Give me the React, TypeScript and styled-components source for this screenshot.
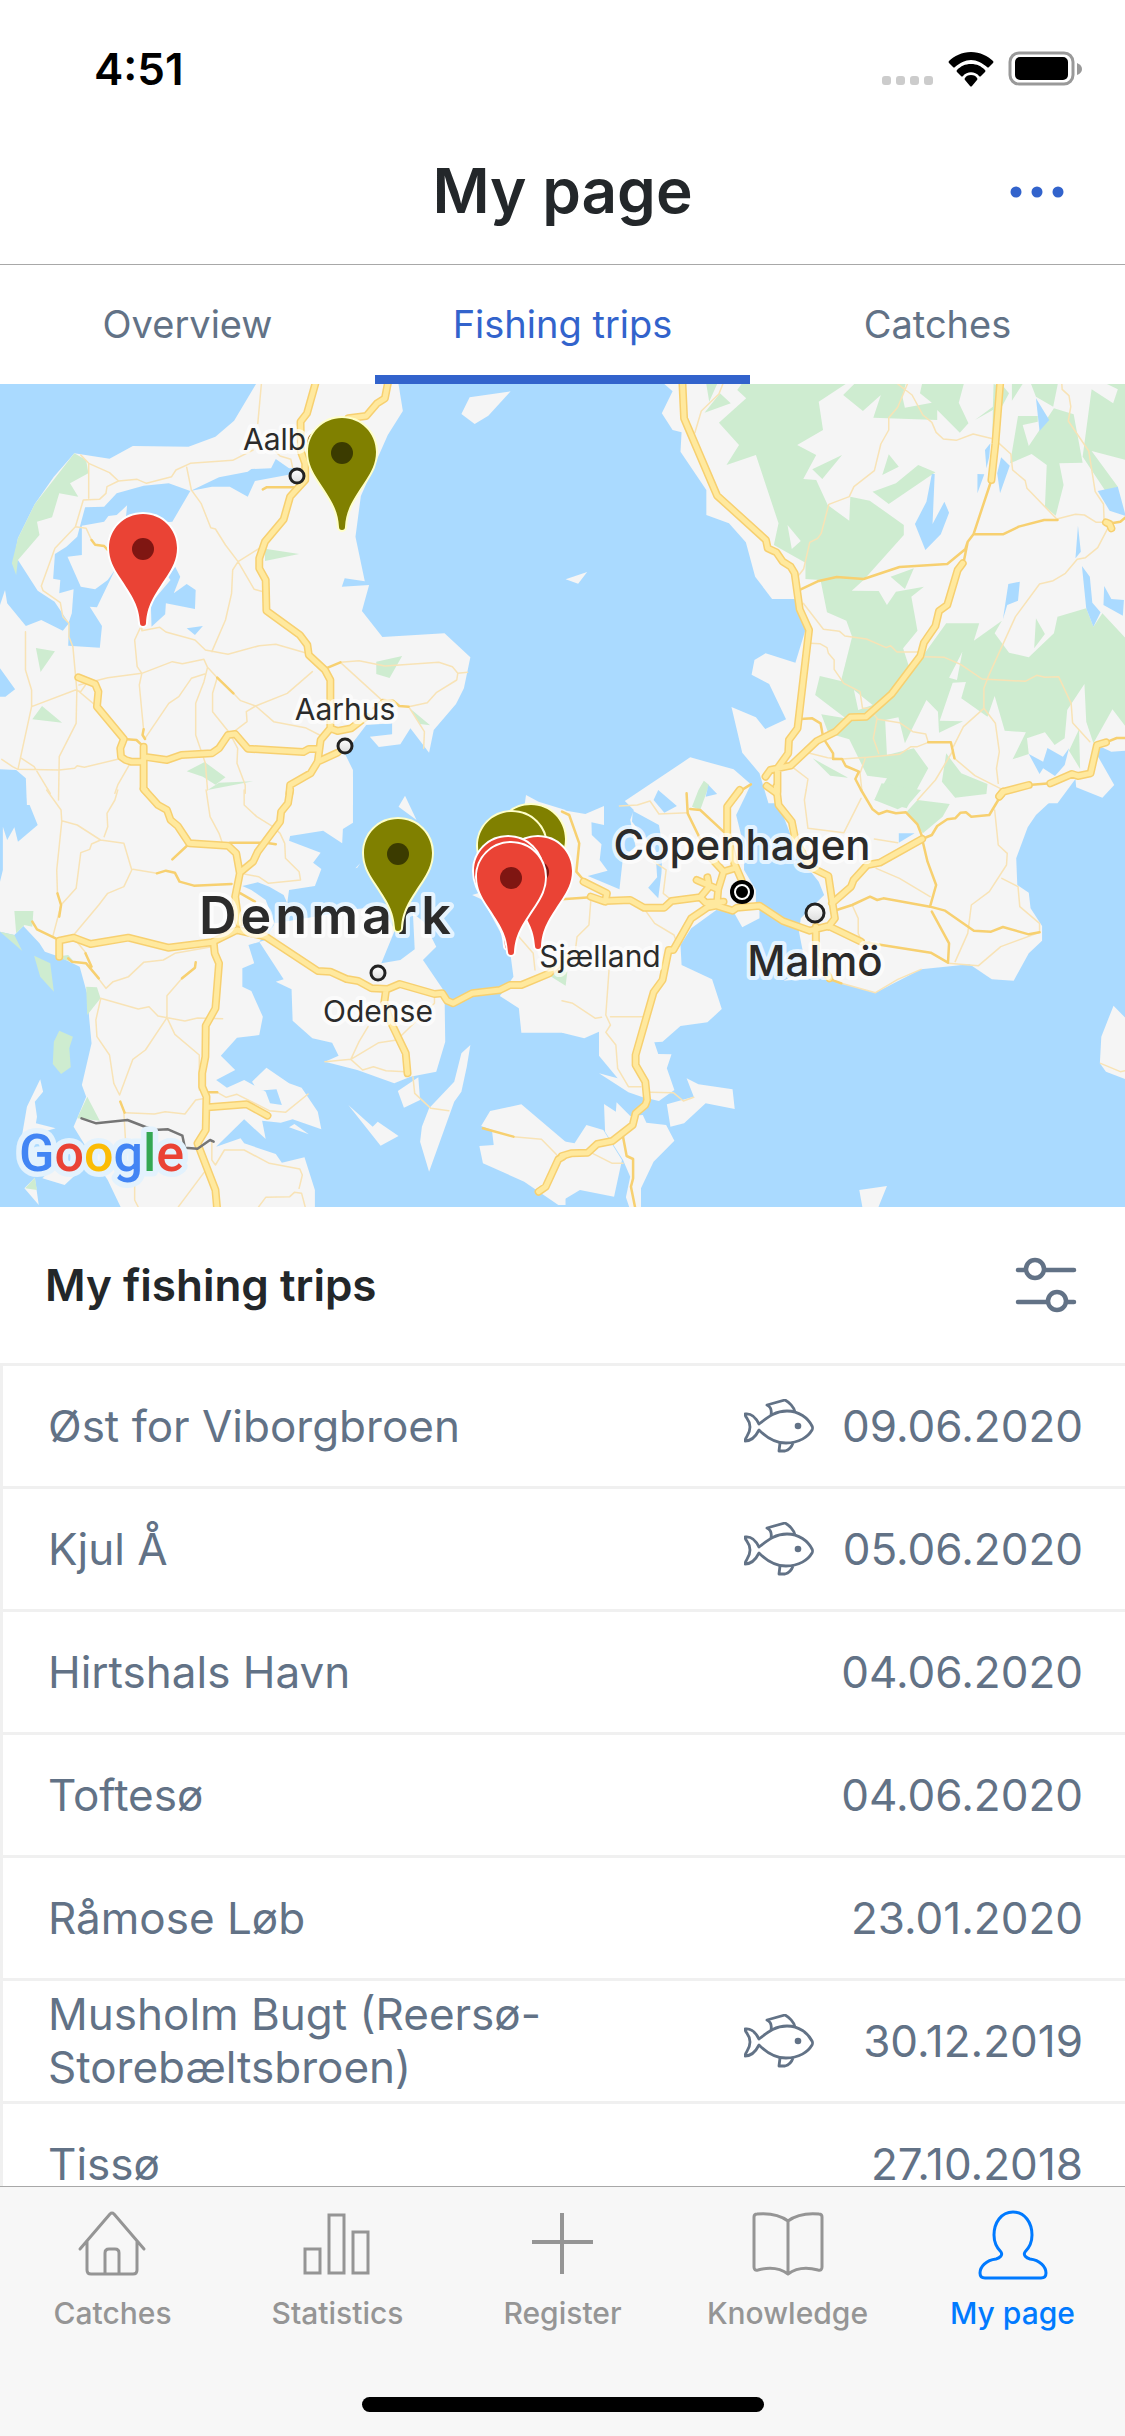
import React from "react"
import styled, { createGlobalStyle } from "styled-components"

const blue = "#3263cc"
const slate = "#627286"
const ink = "#23272a"
const line = "#f0f0f0"
const tabGrey = "#959595"
const iosBlue = "#007aff"

const GlobalStyle = createGlobalStyle`
  * {
    box-sizing: border-box;
  }

  body {
    margin: 0;
    background: #fff;
    font-family: Inter, "Liberation Sans", sans-serif;
  }
`

const Page = styled.div`
  display: flex;
  flex-direction: column;
  height: 100vh;
  overflow: hidden;
`

const StatusBar = styled.div`
  align-items: center;
  color: #000;
  display: flex;
  flex-shrink: 0;
  font-size: 44px;
  font-weight: 600;
  height: 132px;
  justify-content: space-between;
  padding: 6px 43px 0 94px;
`

const StatusIcons = styled.svg`
  display: block;
  height: 36px;
  width: 200px;
`

const Header = styled.header`
  align-items: center;
  border-bottom: 1px solid #a8a8a8;
  display: grid;
  flex-shrink: 0;
  grid-template-columns: 1fr auto 1fr;
  height: 133px;
  padding: 0 56px 14px;
`

const Title = styled.h1`
  color: ${ink};
  font-size: 62px;
  font-weight: 600;
  grid-column: 2;
  line-height: 80px;
  margin: 0;
`

const IconButton = styled.button`
  background: none;
  border: 0;
  color: ${props => props.color};
  display: block;
  justify-self: end;
  padding: 0;

  svg {
    display: block;
  }
`

const Tabs = styled.nav`
  display: grid;
  flex-shrink: 0;
  grid-template-columns: repeat(3, 1fr);
  height: 119px;
`

const Tab = styled.button<{ $active?: boolean }>`
  background: none;
  border: 0;
  border-bottom: 9px solid ${props => (props.$active ? blue : "transparent")};
  color: ${props => (props.$active ? blue : slate)};
  font: 400 38px Inter, sans-serif;
  padding: 7px 0 0;
`

const MapView = styled.svg`
  background: #aadaff;
  display: block;
  flex-shrink: 0;
  width: 100%;
`

const ListHeader = styled.div`
  align-items: center;
  display: flex;
  flex-shrink: 0;
  height: 156px;
  justify-content: space-between;
  padding: 0 48px 0 45px;
`

const ListTitle = styled.h2`
  color: ${ink};
  font-size: 44px;
  font-weight: 600;
  line-height: 53px;
  margin: 0;
`

const List = styled.ul`
  border-left: 3px solid ${line};
  flex: 1;
  list-style: none;
  margin: 0;
  min-height: 0;
  overflow: hidden;
  padding: 0;
`

const Row = styled.a`
  align-items: center;
  border-top: 3px solid ${line};
  color: ${slate};
  display: flex;
  font-size: 44px;
  height: 123px;
  line-height: 53px;
  padding: 0 42px 0 45px;
  text-decoration: none;
`

const Name = styled.span`
  flex: 1;
  padding-right: 150px;
`

const TripDate = styled.time`
  min-width: 269px;
  text-align: right;
`

const TabBar = styled.nav`
  background: #f7f7f7;
  border-top: 1px solid #a8a8a8;
  display: grid;
  flex-shrink: 0;
  grid-template-columns: repeat(5, 1fr);
  padding-top: 20px;
`

const TabLink = styled.a<{ $active?: boolean }>`
  align-items: center;
  color: ${props => (props.$active ? iosBlue : tabGrey)};
  display: flex;
  flex-direction: column;
  font-size: 30px;
  font-weight: 500;
  gap: 14px;
  line-height: 36px;
  text-decoration: none;
`

const HomeIndicator = styled.div`
  background: #000;
  border-radius: 8px;
  grid-column: 1 / -1;
  height: 15px;
  justify-self: center;
  margin: 66px 0 24px;
  width: 402px;
`

// every tile is drawn on its own 1568x1260 grid and placed on the 1125x823 map
const tiles = [
  {
    at: "translate(0 -4) scale(.35906 .33333)",
    land:
      "M713 12 652 122 600 170 525 200 370 198 305 236 207 220 150 290 97 372 50 475 37 550 50 540 105 632 152 665 192 730 175 752 115 720 72 738 20 670 14 630 0 675V865L42 928 15 950 0 950V1168L45 1170 72 1195 75 1275H983V1170L960 1120 1020 1035 1092 1030 1092 1063 1030 1070 1055 1101 1115 1093 1143 1045 1195 1118 1208 1050 1270 972 1292 925 1310 832 1238 760 1065 771 1008 693 1028 615 952 620 960 595 1016 604 990 470 1005 348 1080 165 1122 93 1108 0H718ZM1308 52 1422 34 1360 107 1322 132 1285 102Z",
    green:
      "M207 220 240 240 246 280 195 310 218 350 165 340 145 412 103 425 110 465 50 540 45 585 33 550 50 475 97 372ZM738 506 833 522 738 543ZM100 804 153 814 113 876ZM117 978 173 1028 90 1018ZM570 1146 628 1192 600 1214 565 1190 520 1174ZM705 1204 610 1208 578 1230ZM1048 845 1120 828 1085 894 1048 882ZM1138 982 1198 1036 1170 1032Z",
    water:
      "M237 382 290 380 325 340 400 317 470 310 530 333 480 425 430 430 350 420 354 376 325 405 302 408 290 425 228 437 228 525 188 530 225 620 265 628 300 600 320 570 270 682 250 680 284 738 278 803 190 797 192 725 200 700 205 628 165 640 168 600 148 596 153 522 185 500 215 470 225 430ZM530 333 610 292 690 275 700 267 755 265 768 237 805 265 860 265 800 285 710 303 690 350 640 320 590 320ZM488 560 502 590 484 640 520 612 545 630 543 687 462 670 460 703 422 740 420 670 475 600 468 590ZM520 745 565 738 543 765Z",
    minor:
      "M728 12 718 130M225 225 247 250 247 355M247 250 305 278 330 303 382 298 408 310 478 290 490 270 530 250 648 241 705 210M330 303 298 320 295 340 277 358 232 360 210 440 153 505 115 618 120 632 168 668 175 710 192 730 192 770 203 800 214 930 212 1030 165 1130 163 1260M210 440 240 445 255 480M520 262 533 330 560 370 587 443 600 447 628 495 663 545 708 628 733 635M663 545 648 570 645 640 628 720 590 815M663 545 722 505M395 740 395 752 445 742 462 756 543 780 572 810 635 823 722 797 768 793 850 818M390 745 375 780 382 860 395 880 388 915 400 1050M220 915 300 893 395 880 480 845 508 851 568 838 578 862 605 893M570 882 533 895 498 950 470 970 404 1075M578 862 568 905 545 970 545 1065 572 1150 578 1230M605 893 592 940 592 995 640 1060 662 1105 660 1150 683 1215 683 1240M650 940 670 962 712 978 762 1025 850 1043 890 1065M712 978 800 940 870 875M712 978 686 995 688 1025 645 1060M948 847 1000 842 1072 858 1222 847 1260 860 1275 880 1302 877M1275 880 1272 900 1215 938 1190 968 1138 980 1182 1055 1180 1105M948 847 1065 962M71 755 71 870 88 930 88 980 50 1168 35 1160 5 1138M88 980 210 930 225 935 240 912M215 930 270 980M50 1168 165 1170 208 1165 215 1157 235 1162 345 1133M60 1135 95 1160 140 1240M360 1155 328 1215 320 1240M768 215 780 228 810 238 815 262",
    mid:
      "M732 328 742 322 828 322M255 480 265 494 290 498 300 510M908 865 948 847M345 1077 380 1080 400 1100M400 1048 397 1065 404 1077M605 893 650 940M1040 985 1065 960 1095 962 1112 978 1138 980",
    major:
      "M880 0 878 12 855 100 837 125 838 215 850 250 850 300 808 350 790 418 738 485 722 535 722 565 740 600 742 692 835 765 856 795 860 825 905 870 920 900 920 1045 893 1080 885 1145 865 1180 808 1215 806 1240M885 1145 940 1118M1082 0 1072 55 1050 70 1020 108 970 115M920 1045 940 1053 978 1045 1020 1010M218 892 265 912 274 935 270 980 345 1077 335 1105 337 1130 350 1140 365 1145 400 1145 400 1100M400 1130 465 1140 505 1125 590 1120 610 1105 635 1065 655 1062 690 1106 845 1116 860 1107 885 1107M400 1130 400 1225 405 1232",
  },
  {
    at: "translate(562 -4) scale(.35906 .33333)",
    land:
      "M285 0V12L308 34 278 100 308 150 333 157 330 215 402 330 402 405 465 430 512 487 538 590 585 657 650 657 678 750 650 848 567 820 536 840 528 884 577 912 624 1018 566 1047 540 1012 472 981 502 1118 550 1180 575 1270H1380L1430 1197 1432 1222 1505 1253 1538 1215 1492 1128 1500 1100 1530 1115 1570 1112V0ZM10 598 70 576 45 611Z",
    green:
      "M500 0V12L488 30 513 55 437 128 493 195 458 255 540 225 603 430 590 495 678 548 678 597 720 600 738 697 792 722 808 770 777 903 718 888 705 945 790 1015 722 1003 742 1060 800 1078 850 1187 905 1195 870 1260 960 1285 1020 1165 980 1105 905 1125 900 1020 937 1012 955 1090 1015 960 1047 995 1050 1058 1117 1024 1052 1022 1088 908 1125 906 1112 955 1185 1010 1205 948 1233 1052 1292 1057 1255 1138 1300 1122 1295 1075 1345 1057 1372 1095 1400 1075 1407 990 1455 912 1460 1025 1480 1090 1533 988 1570 1040V775L1505 700 1480 740 1460 685 1380 710 1370 760 1300 832 1245 818 1205 760 1225 722 1147 782 1162 730 1070 730 1003 830 965 855 950 805 990 752 973 650 1008 620 930 635 905 675 882 633 807 632 840 600 952 465 952 435 857 362 803 350 800 422 740 375 708 300 672 297 708 225 655 195 727 150 715 65 790 12V0ZM1320 715 1345 762 1315 805ZM697 268 780 225 725 297ZM910 223 938 260 892 285ZM865 335 930 310 992 255 1040 277 910 372ZM915 590 980 565 955 627ZM783 45 825 0H960L948 50 955 83 1030 68 997 40 1005 0H1122L1105 68 1132 130 1108 158 1045 90 1045 120 867 113 888 45 838 93ZM1150 120 1200 80 1202 12 1230 20 1245 40 1225 80 1212 190 1198 190 1200 90ZM1248 250 1270 108 1325 108 1325 125 1283 135 1300 198 1330 150 1370 85 1425 103 1450 248 1385 250 1397 315 1375 407 1345 380 1350 255 1308 222ZM1253 0H1290L1253 62ZM1302 0H1383L1368 80 1320 50ZM1475 28 1535 70 1548 28 1495 0H1570V240L1475 213 1548 320 1515 335 1450 230ZM400 0H437L410 65ZM440 40 470 70 397 98ZM698 1135 797 1193 747 1187ZM1070 1120 1112 1180 1185 1212 1182 1242 1095 1253 1058 1205ZM1440 1048 1443 1167 1412 1112Z",
    clearing:
      "M813 930 865 975 825 990ZM1115 815 1100 900 1078 893ZM1340 972 1320 1018ZM628 435 665 483 640 507Z",
    water:
      "M1030 282H1038L1032 432 1065 365 1078 398 1055 463 1012 510 983 432 1015 365ZM1320 55 1357 120 1330 153ZM1193 190 1190 230 1182 265 1178 210ZM1223 232 1247 257 1220 340 1212 280ZM1157 282 1176 283 1157 340ZM1437 437 1445 515 1430 535ZM1492 333 1548 320 1570 408 1525 392ZM1448 558 1470 590 1477 668 1500 697 1480 740 1460 685ZM1510 618 1530 657 1565 660 1562 707 1508 675ZM1243 612 1275 605 1270 662 1240 675 1228 718ZM1300 1122 1340 1145 1352 1104 1395 1130 1412 1105 1400 1155 1373 1188 1340 1165 1330 1182Z",
    minor:
      "M448 12 437 42 388 93 370 158M962 12 935 82 910 113 910 150 888 192 870 272 813 320 800 350 743 373 722 460 712 475 690 487 673 567 660 585M935 12 975 45 1005 105 1030 127 1042 157 1062 177 1098 181 1145 162 1205 178 1250 222 1255 270 1290 302 1295 325 1378 417 1430 403 1455 405 1488 427 1510 427M1392 12 1393 28 1412 47 1417 80 1410 123 1467 213 1485 335 1508 372 1510 427M1520 445 1492 503 1458 533 1435 538 1402 580 1368 602 1330 612 1263 710 1187 890 1175 925 1175 985 1118 1040 1090 1100M672 670 728 748 773 754 788 768 848 777 903 803 915 797 933 816 998 816M692 790 718 791 738 803 742 820 758 840 758 868 785 910 830 935 837 985 860 985M1008 830 1065 832 1110 853 1170 897 1290 904 1322 886 1345 892 1383 890 1418 970 1422 1028 1470 1085M1175 985 1207 1030 1218 1115 1210 1165 1215 1210M870 1005 880 1018 940 1028 977 1055 1013 1062 1020 1087 990 1100 972 1100 940 1123 850 1132 780 1137 740 1133 690 1120M877 1018 867 1075 882 1120M1093 1135 1150 1187 1220 1225M1090 1110 1040 1200 990 1260M640 1160 685 1197 680 1230M845 1133 830 1180 835 1230",
    mid:
      "M665 628 712 604 765 591 840 597 940 561 1073 552 1123 508 1130 485 1146 463 1228 463 1272 440 1343 420 1380 420M1196 300 1146 463M1130 485 1118 550M665 1017 697 1015 720 1030 728 1075 755 1120 755 1137 780 1137 790 1158 827 1175 817 1197 833 1230M1020 1087 1083 1087 1093 1135M1300 1215 1360 1210M526 1213 490 1237M1515 1087 1545 1074 1570 1074M1530 430 1555 425 1570 412",
    major:
      "M335 0 340 115 432 347 568 480 573 505 597 517 615 545 637 560 648 580 662 688 688 750 656 1045 632 1080 630 1120 600 1165 600 1235M1221 0 1207 190 1196 300M1116 550 1102 570 1073 675 1050 693 1040 738 1008 788 998 828 918 942 847 1010 803 1012 762 1055 710 1083 637 1157 600 1165 580 1170 567 1190M570 1218 598 1240M1218 1250 1230 1235 1300 1215M1360 1210 1420 1182 1437 1188 1472 1180 1490 1095 1515 1087M1515 427 1525 432 1530 445",
  },
  {
    at: "translate(0 406) scale(.35906 .33333)",
    land:
      "M75 -40V25L105 105 50 155 40 112 20 150 8 110 8 240 0 275V425L40 435 65 408 110 460 125 485 165 500 222 530 245 620 248 680 255 760 228 885 240 920 215 985 205 1010 245 1080 300 1170 340 1260H877V1200L848 1102 785 1118 768 1092 680 1060 670 1045 602 1070 680 988 740 1047 730 992 782 998 815 988 895 1018 885 965 840 893 805 880 742 833 702 875 718 902 770 898 785 945 752 940 740 905 680 870 632 893 602 870 655 840 615 797 660 743 722 735 732 680 700 603 675 590 675 535 708 520 692 465 740 450 765 400 740 330 700 300 675 288 718 277 750 290 790 315 800 340 805 300 877 288 895 237 872 218 893 188 805 152 808 138 900 122 953 160 955 117 983 98V-40ZM765 400 935 370 985 358 1060 350 1100 420 1062 520 1115 510 1155 478 1150 370 1180 395 1215 470 1178 510 1238 605 1240 755 1215 845 1143 860 1098 880 995 840 905 815 943 797 925 758 870 745 815 692 812 598 768 575 790 568 722 455ZM1128 17 1160 90 1110 50ZM990 235 1003 220 995 233ZM1108 903 1165 862 1170 930 1125 953ZM1310 765 1300 830 1285 905 1265 935 1195 1145 1170 1055 1175 1010 1195 955 1265 875 1285 790ZM970 945 1038 1010 1052 995 1110 1038 1060 1067ZM1340 1008 1365 963 1452 943 1575 1055V1245L1555 1245 1460 1175 1345 1120 1335 1068 1375 1065 1370 1020ZM805 1012 820 1002 860 1033ZM1465 15 1500 35 1575 60V728H1452L1445 655 1392 618 1430 560 1420 480 1390 420 1345 330 1315 315 1345 305 1440 200ZM112 868 120 905 97 935 103 980 100 1000 155 1015 60 1045 75 950ZM118 1165 150 1130 215 1150 180 1185ZM68 1195 97 1163 108 1245Z",
    green:
      "M40 363 93 363 90 410 68 405 45 430ZM0 425 40 435 62 483ZM95 497 140 520 150 605 112 560ZM240 590 270 592 280 625 243 675ZM165 722 203 740 193 775 197 832 170 852 147 822 150 755ZM243 920 278 992 215 985ZM1520 550 1575 540V587ZM155 500 190 495 210 520ZM97 1163 103 1200 70 1195Z",
    minor:
      "M130 0 170 60 172 95 158 240 160 310M328 0 320 30 298 70 300 110 290 140M172 92 215 105 280 150 345 160 367 240 345 290 300 310 275 345 205 435M280 150 255 162 250 178 225 188 212 295 170 345 147 440M574 0 585 80 610 130 618 155M680 0 680 45 715 80 760 110 780 130 793 160 795 205 833 245 837 270 748 280 720 260 680 252M370 238 437 250M590 470 487 490 455 510 400 517 358 560 315 575 295 595 270 560M205 443 240 490M280 625 385 657 415 650 440 678 515 693 550 684 620 686M280 628 267 690 270 740 305 795 317 880 333 915 370 808 405 780 465 683 465 617 507 565M465 683 487 733 555 795 555 900M350 968 430 972 460 965 515 972 545 930 572 925M345 968 350 1060M1025 710 1000 755 977 808 1055 758 1105 750 1210 640 1210 620M905 815 977 808 1010 840 1040 830 1075 842 1130 845M1150 860 1155 910 1200 955 1250 962M605 907 630 922 660 913 750 962 795 967 858 912M590 1055 590 1110 600 1125 625 1080 680 1080 750 1120 835 1137 842 1155 833 1195M570 1145 497 1250M720 1251 740 1222 807 1220 820 1207 840 1210 850 1251M1430 1040 1508 1048 1560 1105M375 1180 375 1230 385 1251M1445 440 1485 490 1490 540",
    mid:
      "M90 395 103 418 155 445M160 310 170 345 165 380M640 158 740 158 768 163M520 168 480 208M437 250 462 242 487 248 500 275 540 287 645 282M190 505 200 515 240 520 275 565M238 490 255 530M545 517 543 533 507 565M670 310 710 335M335 935 347 968M575 907 605 907M1345 1015 1430 1040",
    major:
      "M400 -3 440 45 465 60 475 90 495 108 527 160 635 167 658 190 668 250 655 320 665 400M808 0 802 40 783 65 780 95 718 185 705 215 668 248M165 500 165 452 205 443 252 462 357 443 468 473 590 457 660 420 740 440 885 543 920 545 965 567 998 573 1035 595 1080 597 1113 582 1210 612 1232 610 1245 632 1262 640 1315 610 1392 600 1420 585 1452 585 1530 550 1575 500M595 457 598 490 610 520 600 655 573 707 572 800 563 850 563 890 575 920 573 1020 550 1060 600 1200 605 1260M580 952 687 943 745 977M1075 600 1070 640 1090 700 1130 790 1135 850M1568 1100 1555 1108 1520 1190 1500 1205",
    border: "M227 985 268 1000 355 990 427 1020 468 1018 508 1037 515 1073 550 1076 585 1050 595 1055",
  },
  {
    at: "translate(562 406) scale(.35906 .33333)",
    land:
      "M175 33 357 -98 478 -62 526 -17 512 15 485 75 507 170 507 240 540 300 540 345 490 350 550 360 550 385 502 412 480 370 430 360 360 415 330 465 333 525 418 568 445 657 405 697 330 708 280 755 257 757 268 792 305 793 292 835 313 900 270 933 225 922 185 907 103 850 155 865 103 797 103 725 62 745 0 728V60L65 72 117 48 117 105 82 97 83 135 110 163 105 210 127 242 72 258 160 298 170 200 205 170 190 90 200 60ZM575 0 610 60 660 200 715 275 730 315 665 385 660 425 670 480 675 540 617 572 740 560 778 580 873 608 1000 538 1135 523 1197 568 1258 572 1300 490 1337 452 1337 408 1305 355 1300 308 1268 285 1265 205 1297 112 1320 75 1395 0V-30H560ZM1536 647 1575 690V870L1515 845 1498 820 1502 740ZM347 865 380 883 475 898 481 957 400 940 340 1000 302 1010 292 943 367 920ZM117 942 150 965 152 937 190 978 225 975 235 998 290 1005 313 1052 255 1115 220 1195V1260H190L178 1222 190 1160 170 1110 120 1025ZM0 1053 35 1060 68 1005 115 1020 167 1110 145 1220 50 1200 0 1232ZM828 1200 905 1188 878 1260H838Z",
    green:
      "M870 30 890 -20 1000 0 968 40 935 58ZM960 65 990 30 1080 42 1060 80 1005 130ZM362 50 380 0 395 -28 410 -15 385 60ZM0 545H15L10 588Z",
    water:
      "M268 0 320 48 285 68 255 30ZM400 20 408 -15 432 12ZM197 62 270 105 280 170 277 250 268 325 240 293 265 262 260 180 195 95ZM938 130H982L938 158Z",
    minor:
      "M160 48 210 45 245 33 270 72 350 68M680 0 675 30 685 115 785 128 833 25M870 147 935 158M1205 60 1215 165 1240 190 1238 225 1190 305 1140 345 1130 430 1095 515M875 235 940 265 1025 320M1225 265 1270 290 1275 350 1330 400 1330 427 1222 470 1160 527 1075 520M80 335 75 405 42 440 35 500M228 355 258 400 312 435 320 460M135 480 122 675 135 705 122 727 150 765 155 835 185 890 220 890M135 680 225 680M0 632 30 640 93 685 110 682M245 907 310 908 338 933 367 922M85 1090 140 1120 170 1120M778 580 873 608 935 568 1000 538M1500 820 1555 845 1568 842M808 345 825 385 825 430 833 450M255 215 290 240 282 310 305 330",
    mid:
      "M1215 30 1190 75 1140 80 1125 67 1110 68 1095 85 1073 88 1045 108 1030 135 1003 147M833 0 865 58 882 72 905 63 930 70 958 67 990 103 1003 140M1003 147 1018 215 1042 285 1025 350 895 325 878 330 858 320 808 345 765 360M1025 350 1067 362 1147 422 1195 425 1228 411 1300 433 1330 427M1030 365 1078 460 1075 518 1027 488 833 455M740 565 778 580M0 65 20 75 48 160 40 245 60 270M0 328 80 322M347 10 350 70 400 180M357 57 385 60 450 125M170 1040 180 1098 198 1107 198 1165 192 1190 205 1260",
    major:
      "M495 0 460 50 460 130 480 220 500 270M597 -10 603 45 640 95 650 150 690 230 742 258 752 330 760 385 742 410M1003 147 885 218 850 225 812 270 805 290 752 340M60 275 125 310 120 335 80 320M120 333 190 330 228 353 285 353 305 333 385 322 410 290 405 262M375 270 435 298 432 335M385 322 400 338 450 335M395 180 450 245 435 298M450 245 480 235M0 1098 25 1090 72 1088 98 1062 140 1053 197 1005 205 970 232 945 237 930 232 875 205 825 205 795 255 607 280 570 297 480 310 480 360 385 405 352 430 347 475 362 487 353 550 347 615 393 690 422 742 408 833 455M707 410 707 500 745 565M1228 5 1218 18",
  },
]

const layers = [
  { key: "land", fill: "#f5f5f5" },
  { key: "green", fill: "#ceecd0" },
  { key: "clearing", fill: "#f5f5f5" },
  { key: "water", fill: "#aadaff" },
  { key: "minor", stroke: "#f8e3b6", width: 1.5 },
  { key: "mid", stroke: "#f7d070", width: 2.5 },
  { key: "major", stroke: "#f7d070", width: 8 },
  { key: "major", stroke: "#ffe99e", width: 5 },
  { key: "border", stroke: "#757575", width: 2.5 },
]

const towns = [
  { x: 297, y: 92, r: 7 },
  { x: 345, y: 362, r: 7 },
  { x: 378, y: 589, r: 7 },
  { x: 815, y: 529, r: 9 },
]

const olive = { color: "#808000", dot: "#3b3b00", edge: "#ffffc8" }
const red = { color: "#ea4335", dot: "#7f1612", edge: "#fff" }

const pins = [
  { x: 342, y: 34, ...olive },
  { x: 143, y: 130, ...red },
  { x: 398, y: 435, ...olive },
  { x: 531, y: 421, ...olive },
  { x: 512, y: 428, ...olive },
  { x: 538, y: 453, ...red },
  { x: 508, y: 453, ...red },
  { x: 511, y: 459, ...red },
]

const MapLabel = styled.text<{ $size: number; $weight?: number; $spacing?: number }>`
  fill: #2b2b2b;
  font-size: ${props => props.$size}px;
  font-weight: ${props => props.$weight || 400};
  letter-spacing: ${props => props.$spacing || 0}px;
  paint-order: stroke;
  stroke: rgba(255, 255, 255, 0.7);
  stroke-linejoin: round;
  stroke-width: 8px;
`

const Logo = styled.text`
  font: 500 52px Roboto, sans-serif;
  stroke: #e3f2fd;
  stroke-linejoin: round;
  stroke-width: 11px;
`

const LogoFill = styled(Logo)`
  stroke: none;
`

const logoLetters = (
  <>
    <tspan fill="#4285f4">G</tspan>
    <tspan fill="#ea4335">o</tspan>
    <tspan fill="#fbbc05">o</tspan>
    <tspan fill="#4285f4">g</tspan>
    <tspan fill="#34a853">l</tspan>
    <tspan fill="#ea4335">e</tspan>
  </>
)

const TripMap = () => (
  <MapView viewBox="0 0 1125 823" role="img" aria-label="Map of fishing trips">
    <defs>
      <linearGradient id="town" x1="0" y1="0" x2="0" y2="1">
        <stop offset="0" stopColor="#fff" />
        <stop offset="1" stopColor="#dcdcdc" />
      </linearGradient>
    </defs>
    {layers.map((layer, i) => (
      <g
        key={i}
        fill={layer.fill || "none"}
        stroke={layer.stroke}
        strokeWidth={layer.width}
        strokeLinecap="round"
        strokeLinejoin="round"
      >
        {tiles.map(tile => (
          <path key={tile.at} d={tile[layer.key]} transform={tile.at} vectorEffect="non-scaling-stroke" />
        ))}
      </g>
    ))}
    <MapLabel x="243" y="66" $size={30}>Aalborg</MapLabel>
    <MapLabel x="345" y="336" textAnchor="middle" $size={30}>Aarhus</MapLabel>
    <MapLabel x="378" y="638" textAnchor="middle" $size={30}>Odense</MapLabel>
    <MapLabel x="600" y="583" textAnchor="middle" $size={30}>Sjælland</MapLabel>
    <MapLabel x="742" y="476" textAnchor="middle" $size={42} $weight={500}>Copenhagen</MapLabel>
    <MapLabel x="815" y="592" textAnchor="middle" $size={42} $weight={500}>Malmö</MapLabel>
    <MapLabel x="327" y="550" textAnchor="middle" $size={52} $weight={600} $spacing={4}>Denmark</MapLabel>
    {towns.map(town => (
      <circle key={town.y} cx={town.x} cy={town.y} r={town.r} fill="url(#town)" stroke="#222" strokeWidth="3" />
    ))}
    <circle cx="742" cy="508" r="12" />
    <circle cx="742" cy="508" r="7" stroke="#fff" strokeWidth="2" />
    {pins.map(pin => (
      <g key={`${pin.x}-${pin.y}`} transform={`translate(${pin.x} ${pin.y})`}>
        <path
          d="M0 0C-19 0-34 15-34 34c0 12 5 20 10 28C-10 83-4 92-3 109a3 3 0 0 0 6 0C4 92 10 83 24 62c5-8 10-16 10-28C34 15 19 0 0 0Z"
          fill={pin.color}
          stroke={pin.edge}
          strokeWidth="4"
          paintOrder="stroke"
        />
        <circle cy="35" r="11" fill={pin.dot} />
      </g>
    ))}
    <Logo x="19" y="787" aria-hidden="true">{logoLetters}</Logo>
    <LogoFill x="19" y="787">{logoLetters}</LogoFill>
  </MapView>
)

const Fish = () => (
  <svg width="70" height="54" viewBox="0 0 70 54" fill="none" stroke={slate} strokeWidth="2.8" strokeLinejoin="round" aria-label="Catch">
    <path d="M15 25C25 17 32 12 43 12c12 0 21 7 25 15 1 2 1 2 0 4-4 7-13 13-26 13-11 0-20-6-27-13-3 6-8 11-14 11 0-4 5-6 5-14S1 19 1 15c6-1 11 4 14 10Z" />
    <path d="M27 16c1-5 0-8-4-10L41 1c4 2 9 7 10 12M36 44l-1 8h6c4-1 7-5 8-8" />
    <circle cx="54" cy="27" r="3.3" fill={slate} stroke="none" />
  </svg>
)

const trips = [
  { name: "Øst for Viborgbroen", date: "09.06.2020", caught: true },
  { name: "Kjul Å", date: "05.06.2020", caught: true },
  { name: "Hirtshals Havn", date: "04.06.2020" },
  { name: "Toftesø", date: "04.06.2020" },
  { name: "Råmose Løb", date: "23.01.2020" },
  { name: "Musholm Bugt (Reersø-Storebæltsbroen)", date: "30.12.2019", caught: true },
  { name: "Tissø", date: "27.10.2018" },
]

const tabLinks = [
  {
    label: "Catches",
    icon: <path d="M3 42 33 7q2-2 4 0l30 35M10 34v29q0 4 4 4h42q4 0 4-4V34M28 66V46q0-4 4-4h6q4 0 4 4v20" />,
  },
  {
    label: "Statistics",
    icon: <path d="M3 42h15v24H3ZM27 8h15v58H27ZM51 25h15v41H51Z" strokeLinejoin="miter" />,
  },
  { label: "Register", icon: <path d="M35 6v61M5 35h61" strokeWidth="4" strokeLinecap="butt" /> },
  {
    label: "Knowledge",
    icon: (
      <path d="M36 14C28 8 16 6 5 7Q2 7 2 10V60q0 4 4 3 18-5 30 4 12-9 30-4 4 1 4-3V10q0-3-3-3C56 6 44 8 36 14V66" />
    ),
  },
  {
    label: "My page",
    active: true,
    icon: (
      <path d="M36 5C24 5 17 16 17 28c0 8 3 13 7 17 2 3-1 6-5 7C9 53 3 60 3 66q0 5 5 5h56q5 0 5-5c0-6-6-13-16-14-4-1-7-4-5-7 4-4 7-9 7-17C55 16 48 5 36 5Z" />
    ),
  },
]

const App = () => (
  <Page>
    <GlobalStyle />
    <StatusBar>
      <span>4:51</span>
      <StatusIcons viewBox="0 0 200 36" aria-hidden="true">
        <g fill="#ccc">
          <rect y="25" width="9" height="9" rx="3" />
          <rect x="14" y="25" width="9" height="9" rx="3" />
          <rect x="28" y="25" width="9" height="9" rx="3" />
          <rect x="42" y="25" width="9" height="9" rx="3" />
        </g>
        <path d="M89 1C80 1 72 5 67 10q-1 1 0 2l4 4q1 1 2 0c5-4 10-7 16-7s11 3 16 7q1 1 2 0l4-4q1-1 0-2C106 5 98 1 89 1ZM89 13c-6 0-10 2-14 6q-1 1 0 2l4 4q1 1 2 0c4-5 12-5 16 0q1 1 2 0l4-4q1-1 0-2c-4-4-8-6-14-6ZM89 24c-3 0-5 1-6 3q-1 1 0 2l5 6q1 1 2 0l5-6q1-1 0-2c-1-2-3-3-6-3Z" />
        <rect x="128" y="2" width="63" height="31" rx="9" fill="none" stroke="#999" strokeWidth="3" />
        <rect x="133" y="6" width="53" height="23" rx="5" />
        <path d="M195 12q5 2 5 6t-5 6Z" fill="#999" />
      </StatusIcons>
    </StatusBar>
    <Header>
      <Title>My page</Title>
      <IconButton color={blue} aria-label="More">
        <svg width="64" height="40" viewBox="0 0 64 40" fill="currentColor">
          <circle cx="11" cy="21" r="5.5" />
          <circle cx="32" cy="21" r="5.5" />
          <circle cx="53" cy="21" r="5.5" />
        </svg>
      </IconButton>
    </Header>
    <Tabs>
      <Tab>Overview</Tab>
      <Tab $active>Fishing trips</Tab>
      <Tab>Catches</Tab>
    </Tabs>
    <TripMap />
    <ListHeader>
      <ListTitle>My fishing trips</ListTitle>
      <IconButton color={slate} aria-label="Filter">
        <svg width="62" height="56" viewBox="0 0 62 56" fill="#fff" stroke="currentColor" strokeWidth="4.5" strokeLinecap="round">
          <path d="M3 13h56M3 45h56" />
          <circle cx="20" cy="12" r="9" />
          <circle cx="42" cy="44" r="9" />
        </svg>
      </IconButton>
    </ListHeader>
    <List>
      {trips.map(trip => (
        <li key={trip.name}>
          <Row href="#trip">
            <Name>{trip.name}</Name>
            {trip.caught && <Fish />}
            <TripDate>{trip.date}</TripDate>
          </Row>
        </li>
      ))}
    </List>
    <TabBar>
      {tabLinks.map(tab => (
        <TabLink key={tab.label} href="#tab" $active={tab.active}>
          <svg
            width="72"
            height="74"
            viewBox="0 0 72 74"
            fill="none"
            stroke="currentColor"
            strokeWidth="3"
            strokeLinecap="round"
            strokeLinejoin="round"
            aria-hidden="true"
          >
            {tab.icon}
          </svg>
          {tab.label}
        </TabLink>
      ))}
      <HomeIndicator />
    </TabBar>
  </Page>
)

export default App
